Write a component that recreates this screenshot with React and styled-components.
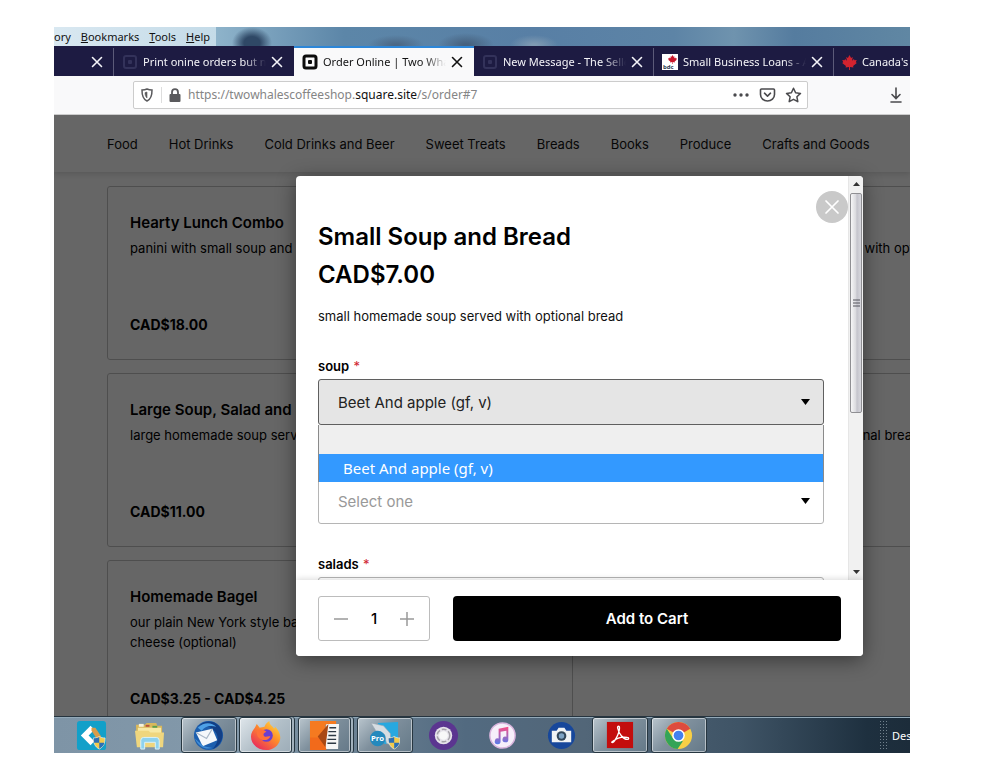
import React, { useState } from 'react';
import styled, { createGlobalStyle, css } from 'styled-components';

const GlobalStyle = createGlobalStyle`
  * { box-sizing: border-box; }
  body { margin: 0; background: #fff; }
  button, select, input { font: inherit; color: inherit; }
  h2, h3, p, ul { margin: 0; padding: 0; }
`;

const shopFont = css`font-family: Inter, "Liberation Sans", sans-serif;`;
const systemFont = css`font-family: "Noto Sans", "Open Sans", sans-serif;`;

const Backdrop = styled.div`
  display: flex;
  height: 100vh;
  padding: 27px 89px 19px 54px;
`;

const Screen = styled.div`
  flex: 1;
  min-width: 0;
  display: flex;
  flex-direction: column;
  overflow: hidden;
`;

/* ---------- browser chrome ---------- */

const MenuBar = styled.nav`
  ${systemFont}
  flex: none;
  display: flex;
  height: 19px;
  background:
    radial-gradient(ellipse 20px 16px at 198px 16px, #2f4866 40%, transparent 100%),
    radial-gradient(ellipse 28px 10px at 342px 18px, #4c6885 10%, transparent 100%),
    radial-gradient(ellipse 28px 12px at 412px 18px, #46617e 10%, transparent 100%),
    radial-gradient(ellipse 24px 10px at 480px 18px, #7f9ab2 10%, transparent 100%),
    linear-gradient(90deg, #8fb4cb 160px, #5c86a8 290px, #587fa5 480px, #5d84a6 620px, #6f93ae 680px, #557c9f 740px, #6087a3 100%);
`;

const MenuItems = styled.div`
  display: flex;
  gap: 10px;
  padding-right: 6px;
  background: linear-gradient(90deg, #d9e8f1, #c4dbe8);
`;

const MenuItem = styled.button`
  padding: 0;
  border: 0;
  background: none;
  font-size: 11px;
  line-height: 18px;
  color: #111;
`;

const TabStrip = styled.div`
  ${systemFont}
  flex: none;
  display: flex;
  height: 30px;
  background: #1d1b42;
  overflow: hidden;
`;

const Tab = styled.div`
  position: relative;
  flex: none;
  display: flex;
  align-items: center;
  gap: 5px;
  width: ${p => (p.$stub ? 60 : 180)}px;
  padding: 0 11px 0 8px;
  justify-content: ${p => (p.$stub ? 'flex-end' : 'flex-start')};
  font-size: 11px;
  color: ${p => (p.$active ? '#111' : '#f4f4f8')};
  background: ${p => (p.$active ? '#f9f9fa' : 'transparent')};
  border-top: 2px solid ${p => (p.$active ? '#2c86d8' : 'transparent')};
  box-shadow: ${p => (p.$line ? 'inset -1px 0 #5c5b79' : 'none')};
`;

const TabTitle = styled.span`
  flex: 1;
  overflow: hidden;
  white-space: nowrap;
  line-height: 18px;
  mask-image: linear-gradient(90deg, #000 82%, transparent 100%);
`;

const TabClose = styled.button`
  display: flex;
  padding: 0;
  border: 0;
  background: none;
`;

const Toolbar = styled.div`
  ${systemFont}
  flex: none;
  display: flex;
  align-items: center;
  justify-content: space-between;
  height: 39px;
  padding: 0 6px 0 79px;
  background: #f9f9fa;
  border-bottom: 1px solid #ccc;
`;

const AddressBar = styled.div`
  flex: 0 0 674px;
  flex-basis: 87.5%;
  display: flex;
  align-items: center;
  gap: 7px;
  height: 28px;
  padding: 0 5px 0 4px;
  background: #fff;
  border: 1px solid #ccc;
  border-radius: 2px;
  color: #5a5a5d;
`;

const ShieldBox = styled.span`
  display: flex;
  padding-right: 5px;
  border-right: 1px solid #ddd;
`;

const PageActions = styled.div`
  display: flex;
  gap: 9px;
`;

const Url = styled.span`
  flex: 1;
  font-size: 12px;
  line-height: 18px;
  color: #858585;
  b { font-weight: 400; color: #111; }
`;

const IconButton = styled.button`
  display: flex;
  padding: 0;
  border: 0;
  background: none;
  color: #4a4a4d;
`;

/* ---------- shop page ---------- */

const Page = styled.main`
  ${shopFont}
  position: relative;
  flex: 1;
  min-height: 0;
  overflow: hidden;
  background: #fff;
  color: #000;
`;

const CategoryNav = styled.nav`
  display: flex;
  gap: 31px;
  height: 57px;
  padding: 0 53px;
  align-items: center;
  box-shadow: 0 2px 6px rgba(0, 0, 0, 0.15);
`;

const CategoryLink = styled.a`
  font-size: 13px;
  line-height: 20px;
  white-space: nowrap;
  color: #111;
  text-decoration: none;
`;

const CardGrid = styled.div`
  display: grid;
  grid-template-columns: repeat(2, 58%);
  grid-auto-rows: 174px;
  gap: 13px;
  padding: 14px 0 0 53px;
`;

const Card = styled.article`
  display: flex;
  flex-direction: column;
  padding: 25px 22px 24px;
  border: 1px solid #c4c4c4;
  border-radius: 3px;
`;

const CardTitle = styled.h3`
  font-size: 15px;
  line-height: 22px;
  font-weight: 600;
`;

const CardText = styled.p`
  flex: 1;
  padding-top: 4px;
  font-size: 13px;
  line-height: 20px;
  white-space: pre-line;
`;

const CardPrice = styled.p`
  font-size: 14px;
  line-height: 20px;
  font-weight: 700;
`;

const Overlay = styled.div`
  position: absolute;
  inset: 0;
  display: flex;
  padding: 61px 47px 60px 242px;
  background: rgba(0, 0, 0, 0.6);
`;

const Modal = styled.section`
  position: relative;
  flex: 1;
  min-width: 0;
  display: flex;
  flex-direction: column;
  background: #fff;
  border-radius: 4px;
  box-shadow: 0 4px 20px rgba(0, 0, 0, 0.45);
  overflow: hidden;
`;

const ModalTop = styled.div`
  flex: 1;
  min-height: 0;
  display: flex;
`;

const ModalBody = styled.div`
  flex: 1;
  overflow: hidden;
  padding: 42px 24px 0 22px;
`;

const ModalTitle = styled.h2`
  font-size: 24px;
  line-height: 38px;
  font-weight: 600;
`;

const Description = styled.p`
  padding-top: 12px;
  font-size: 13px;
  line-height: 20px;
  color: #111;
`;

const Options = styled.div`
  display: grid;
  gap: 30px;
  padding-top: 30px;
`;

const Field = styled.div`
  display: grid;
  gap: 3px;
`;

const FieldLabel = styled.label`
  font-size: 13px;
  line-height: 20px;
  font-weight: 600;
  span { padding-left: 1px; font-weight: 400; color: #d0232f; }
`;

const SelectBox = styled.div`
  position: relative;
  display: flex;
  align-items: center;
`;

const Select = styled.select`
  appearance: none;
  width: 100%;
  height: 46px;
  padding: 0 19px;
  font-size: 15px;
  border: 1px solid ${p => (p.$open ? '#5f5f5f' : '#b5b5b5')};
  border-radius: 3px;
  background: ${p => (p.$open ? '#e5e5e5' : '#fff')};
  color: ${p => (p.$open ? '#222' : '#999')};
`;

const Caret = styled.svg`
  position: absolute;
  right: 14px;
  pointer-events: none;
`;

const OptionList = styled.ul`
  ${systemFont}
  position: absolute;
  z-index: 1;
  top: 100%;
  left: 0;
  right: 0;
  list-style: none;
  border: solid #8a8a8a;
  border-width: 0 1px;
`;

const Option = styled.li`
  height: ${p => (p.$selected ? 28 : 29)}px;
  padding: 0 24px;
  font-size: 15px;
  line-height: 28px;
  color: #fff;
  background: ${p => (p.$selected ? '#3399ff' : '#efefef')};
`;

const CloseModal = styled.button`
  position: absolute;
  top: 15px;
  right: 15px;
  display: flex;
  padding: 8px;
  border: 0;
  border-radius: 50%;
  background: #c9c9c9;
  color: #fff;
`;

const ScrollBar = styled.div`
  flex: none;
  display: flex;
  flex-direction: column;
  align-items: center;
  width: 15px;
  padding: 6px 1px;
  background: #f1f1f1;
  border-left: 1px solid #e6e6e6;
`;

const ScrollThumb = styled.div`
  display: flex;
  align-items: center;
  justify-content: center;
  flex: 0 0 56%;
  width: 100%;
  margin: 7px 0 auto;
  border: 1px solid #8f8f93;
  border-radius: 2px;
  background: linear-gradient(90deg, #f6f6f7, #dcdce0 45%, #c4c4cc 60%, #d8d8de);
`;

const ModalFooter = styled.footer`
  position: relative;
  flex: none;
  display: flex;
  gap: 23px;
  padding: 16px 22px 15px;
  background: #fff;
  box-shadow: 0 -1px 6px rgba(0, 0, 0, 0.15);
`;

const Stepper = styled.div`
  flex: 0 0 112px;
  display: flex;
  align-items: center;
  justify-content: space-between;
  height: 45px;
  padding: 0 15px;
  border: 1px solid #bcbcbc;
  border-radius: 3px;
`;

const StepButton = styled.button`
  display: flex;
  padding: 0;
  border: 0;
  background: none;
  color: #999;
`;

const Quantity = styled.input`
  width: 32px;
  padding: 0;
  border: 0;
  text-align: center;
  font-size: 15px;
  font-weight: 500;
`;

const AddButton = styled.button`
  flex: 1;
  border: 0;
  border-radius: 4px;
  background: #000;
  color: #fff;
  font-size: 15px;
  font-weight: 600;
`;

/* ---------- taskbar ---------- */

const TaskBar = styled.footer`
  ${systemFont}
  flex: none;
  display: flex;
  align-items: center;
  justify-content: space-between;
  height: 37px;
  padding-left: 9px;
  border-top: 1px solid #26343f;
  box-shadow: inset 0 1px #93a9b8;
  background: linear-gradient(90deg, #7e94a6, #8399aa 22%, #6b8193 35%, #526a80 48%, #526678 62%, #3f5466 80%, #1e303f 95%, #1c2c3a);
  color: #fff;
`;

const TaskItems = styled.div`
  flex: 0 0 76%;
  display: flex;
  justify-content: space-between;
`;

const TaskButton = styled.button`
  display: flex;
  align-items: center;
  justify-content: center;
  width: ${p => (p.$stacked ? 53 : 56)}px;
  height: 36px;
  margin-right: ${p => (p.$stacked ? 3 : 0)}px;
  padding: 0;
  border: 1px solid ${p => (p.$running ? '#263640' : 'transparent')};
  border-radius: 3px;
  background: ${p => {
    if (p.$focused) return 'linear-gradient(135deg, #dfe6eb, #b3c0c9 50%, #9dadb8)';
    return p.$running ? 'linear-gradient(135deg, #b9c5cd, #7f909d 45%, #657988)' : 'none';
  }};
  box-shadow:
    inset 0 0 0 1px ${p => (p.$running ? 'rgba(255, 255, 255, 0.5)' : 'transparent')},
    2px 0 ${p => (p.$stacked ? '#a3b2bd' : 'transparent')},
    3px 0 ${p => (p.$stacked ? '#263640' : 'transparent')};
`;

const TaskTail = styled.div`
  display: flex;
  align-items: center;
  gap: 5px;
  width: 31px;
  overflow: hidden;
  font-size: 11px;
`;

const Grip = styled.svg`
  flex: none;
`;

/* ---------- icons ---------- */

const Cross = ({ size = 12, width = 1.6 }) => (
  <svg width={size} height={size} viewBox="0 0 12 12" fill="none" stroke="currentColor" strokeWidth={width} strokeLinecap="round">
    <path d="M1.5 1.5l9 9M10.5 1.5l-9 9" />
  </svg>
);

const SquareLogo = ({ dim }) => (
  <svg width="16" height="16" viewBox="0 0 16 16">
    <rect x="2" y="2" width="12" height="12" rx="2" fill="none" stroke={dim ? '#33325a' : '#0c0c0c'} strokeWidth={dim ? 2 : 3} />
    <rect x="6" y="6" width="4" height="4" rx="1" fill={dim ? '#33325a' : '#0c0c0c'} />
  </svg>
);

const leaf = 'M8 0l1.7 3.2 1.8-1-.8 4 2-2 .6 1.4 2.4-.4-1 2.6 1.1.8-4 3.2.4 1.4-3.7-.5V16h-1v-3.3l-3.7.5.4-1.4-4-3.2 1.1-.8-1-2.6 2.4.4.6-1.4 2 2-.8-4 1.8 1z';

const MapleIcon = () => (
  <svg width="15" height="15" viewBox="0 0 16 16"><path d={leaf} fill="#d3232f" /></svg>
);

const BankIcon = () => (
  <svg width="16" height="16" viewBox="0 0 16 16">
    <rect width="16" height="16" fill="#fff" />
    <g transform="translate(6 1) scale(.56)"><path d={leaf} fill="#c9162b" /></g>
    <text x="1" y="15" fontSize="6" fontWeight="700" fontFamily="Open Sans, sans-serif" fill="#26364f">bdc</text>
  </svg>
);

const ShieldIcon = () => (
  <svg width="18" height="16" viewBox="0 0 18 16" fill="none" stroke="currentColor" strokeWidth="1.5">
    <path d="M9 2c1.700 .8 3.300 1 5 1 .1 5-.6 9-5 11-4.400-2-5.100-6-5-11 1.700 0 3.300-.2 5-1z" />
    <path d="M9 5v6c-1.600-1.400-2-3.400-2-5.400z" fill="currentColor" strokeWidth=".6" />
  </svg>
);

const LockIcon = () => (
  <svg width="12" height="14" viewBox="0 0 12 14">
    <path d="M3 7V4.200a3 3 0 016 0V7" fill="none" stroke="currentColor" strokeWidth="1.800" />
    <rect x="0.500" y="6" width="11" height="8" rx="1" fill="currentColor" />
  </svg>
);

const DotsIcon = () => (
  <svg width="18" height="16" viewBox="0 0 18 16" fill="currentColor">
    <circle cx="3" cy="8" r="1.700" /><circle cx="9" cy="8" r="1.700" /><circle cx="15" cy="8" r="1.700" />
  </svg>
);

const PocketIcon = () => (
  <svg width="17" height="16" viewBox="0 0 17 16" fill="none" stroke="currentColor" strokeWidth="1.600" strokeLinecap="round" strokeLinejoin="round">
    <path d="M2.500 2h12a1 1 0 011 1v4.500a7 6.500 0 01-14 0V3a1 1 0 011-1z" />
    <path d="M5.500 6.200l3 2.900 3-2.900" />
  </svg>
);

const StarIcon = () => (
  <svg width="17" height="16" viewBox="0 0 17 16" fill="none" stroke="currentColor" strokeWidth="1.500" strokeLinejoin="round">
    <path d="M8.500 1.300l2.100 4.500 4.900.6-3.600 3.400.9 4.900-4.300-2.400-4.300 2.400.9-4.900L1.500 6.400l4.900-.6z" />
  </svg>
);

const DownloadIcon = () => (
  <svg width="16" height="18" viewBox="0 0 16 18" fill="none" stroke="currentColor" strokeWidth="1.600" strokeLinecap="round">
    <path d="M8 2v10M4 8.500l4 4 4-4M3 16h10" />
  </svg>
);

const AdminShield = ({ x, y }) => (
  <g transform={`translate(${x} ${y})`}>
    <path d="M6 0c2 1.200 3.600 1.500 6 1.500C12 7 10.500 10.500 6 13 1.500 10.500 0 7 0 1.500 2.400 1.500 4 1.200 6 0z" fill="#f3cb4a" stroke="#dfe5ea" strokeWidth=".8" />
    <path d="M6 .5V6.500H.7C.3 5 .3 3.500.3 1.900 2.600 1.900 4 1.700 6 .5zM6 6.500h5.300C10.500 9.500 9 11.200 6 12.600z" fill="#2c6fb5" />
  </g>
);

const taskIcons = {
  remote: (
    <>
      <rect x="1" y="1" width="30" height="30" rx="3" fill="#12a0c9" />
      <path d="M15 6L5 16l10 10 4-4-6-6 6-6z" fill="#fff" />
      <path d="M16 8h4l6 9-4 3-6-9z" fill="#d99c48" />
      <AdminShield x={18} y={17} />
    </>
  ),
  explorer: (
    <>
      <path d="M2 5h9l2-2h10l1 3h5v20H3z" fill="#d9b85c" />
      <path d="M4 8h24v18H4z" fill="#f7e9a4" />
      <path d="M1 11h14l2 2h14l-1 15H3z" fill="#efd67e" />
      <path d="M5 4h5v3H5z" fill="#f5f2dc" /><path d="M12 5h4v2h-4z" fill="#b9533c" /><path d="M19 6h5v2h-5z" fill="#5a9f4d" />
      <path d="M7 30v-9q0-3 3-3h13q3 0 3 3v9h-4v-7H11v7z" fill="#8ed2ee" stroke="#d9f2fb" />
    </>
  ),
  mail: (
    <>
      <circle cx="16" cy="16" r="15" fill="#1d5fae" />
      <path d="M6 6C13-1 26 0 30 12c2 8-3 16-10 18 6-6 7-13 3-18C18 6 11 5 6 6z" fill="#123f86" />
      <path d="M5 8c6-6 14-6 19-1-7-2-12 0-15 4z" fill="#4ea1e6" />
      <path d="M3 13l17-4 5 12-15 6z" fill="#f5f8fb" />
      <path d="M3 13l11 6 6-10" fill="none" stroke="#aab8c8" strokeWidth="1.200" />
      <path d="M2 19c3 8 11 12 18 10l-9-2z" fill="#3e8cd6" />
    </>
  ),
  firefox: (
    <>
      <defs>
        <linearGradient id="fox" x1="1" y1="0" x2=".2" y2="1">
          <stop offset="0" stopColor="#ffe94a" /><stop offset=".45" stopColor="#ff9128" /><stop offset="1" stopColor="#e8265f" />
        </linearGradient>
      </defs>
      <path d="M5 8l2-4 3 4 5-1c1-3 3-5 5-6 0 4 3 5 5 8l1-2c4 4 6 9 5 13-1 6-7 11-14 11C8 31 1 25 1 17c0-4 2-6 4-9z" fill="url(#fox)" />
      <circle cx="17" cy="16" r="6.500" fill="#6a3fd0" />
      <path d="M7 11c3-2 7-1 10 1-3 1-4 3-2 5 2 1 4-1 6 0-2 5-10 5-13 0-1-2-1-4-1-6z" fill="#ff7139" />
    </>
  ),
  notes: (
    <>
      <path d="M1 1h27v4H17v26H1z" fill="#f57a20" />
      <path d="M18 4h13l-1 26H14z" fill="#f6f6f6" />
      <path d="M1 18h14l3 13H1z" fill="#f26a1b" />
      <path d="M20 4L9 17l8 11z" fill="#a94814" />
      <path d="M21 8h7M20 12h8M20 16h8M19 20h9M19 24h9" stroke="#2d3944" strokeWidth="1.500" />
    </>
  ),
  pro: (
    <>
      <path d="M9 3l21-1v20l-14 3z" fill="#28a8df" />
      <path d="M2 3l13 3 7 8 1 12-5-2-2-9-9-4z" fill="#d6dde2" stroke="#93a1ab" strokeWidth=".6" />
      <circle cx="9" cy="19" r="8" fill="#2489bd" />
      <text x="2" y="22" fontSize="8" fontWeight="700" fontFamily="Open Sans, sans-serif" fill="#fff">Pro</text>
      <AdminShield x={20} y={17} />
    </>
  ),
  tor: (
    <>
      <circle cx="16" cy="16" r="15" fill="#5b3590" />
      <circle cx="16" cy="16" r="9" fill="#e6e3ea" />
      <circle cx="16" cy="16" r="6.500" fill="none" stroke="#a5a2a9" strokeWidth="1.500" strokeDasharray="5 2" />
      <circle cx="16" cy="16" r="4.500" fill="#f8f8f8" />
    </>
  ),
  music: (
    <>
      <defs>
        <linearGradient id="note" x1="0" y1="0" x2="0" y2="1">
          <stop offset="0" stopColor="#fb4d86" /><stop offset="1" stopColor="#587bea" />
        </linearGradient>
      </defs>
      <circle cx="16" cy="16" r="13" fill="#f6effa" stroke="#d9b4dd" strokeWidth="1.500" />
      <path d="M12 9l10-2v13a3 3 0 11-2-2.800V11l-6 1.200V22a3 3 0 11-2-2.800z" fill="url(#note)" />
    </>
  ),
  camera: (
    <>
      <circle cx="16" cy="16" r="14" fill="#17479b" />
      <path d="M6 11h5l2-3h6l2 3h5v12H6z" fill="#f1f3f5" />
      <circle cx="16" cy="16.500" r="5" fill="#33475b" />
      <circle cx="16" cy="16.500" r="2.800" fill="#7fa3c4" />
    </>
  ),
  pdf: (
    <>
      <rect x="3" y="2" width="27" height="27" fill="#c30d0d" />
      <path d="M8 23c2 2 8-9 8-15 0-2-2-2-2 0 1 6 6 12 10 12 2 0 2-2 0-2-5-1-11 1-15 4-1 .5-1 1-1 1z" fill="none" stroke="#fff" strokeWidth="1.400" />
    </>
  ),
  chrome: (
    <>
      <circle cx="16" cy="16" r="14" fill="#f8cf45" />
      <path d="M16 16L3.900 9A14 14 0 0128.100 9z" fill="#dd4b3e" />
      <path d="M10.400 19.200L3.900 9A14 14 0 0015 30l5.500-8z" fill="#33a457" />
      <circle cx="16" cy="16" r="6.500" fill="#fff" />
      <circle cx="16" cy="16" r="5" fill="#4480ee" />
    </>
  ),
};

/* ---------- content ---------- */

const tabs = [
  { title: 'Print onine orders but not', icon: <SquareLogo dim /> },
  { title: 'Order Online | Two Whales', icon: <SquareLogo />, active: true },
  { title: 'New Message - The Seller', icon: <SquareLogo dim />, line: true },
  { title: 'Small Business Loans - Ap', icon: <BankIcon />, line: true },
  { title: "Canada's", icon: <MapleIcon /> },
];

const categories = [
  'Food', 'Hot Drinks', 'Cold Drinks and Beer', 'Sweet Treats', 'Breads', 'Books', 'Produce', 'Crafts and Goods',
];

const products = [
  { name: 'Hearty Lunch Combo', text: 'panini with small soup and salad', price: 'CAD$18.00' },
  { name: 'Large Soup and Bread', text: 'large homemade soup served with salad, with optional bread', price: 'CAD$9.00' },
  { name: 'Large Soup, Salad and Bread', text: 'large homemade soup served with salad', price: 'CAD$11.00' },
  { name: 'Small Soup and Bread', text: 'small home-made soup served with optional bread', price: 'CAD$7.00' },
  { name: 'Homemade Bagel', text: 'our plain New York style bagel with cream\ncheese (optional)', price: 'CAD$3.25 - CAD$4.25' },
];

const tasks = [
  { id: 'remote' }, { id: 'explorer' }, { id: 'mail', running: true },
  { id: 'firefox', running: true, focused: true, stacked: true },
  { id: 'notes', running: true, stacked: true }, { id: 'pro', running: true },
  { id: 'tor' }, { id: 'music' }, { id: 'camera' },
  { id: 'pdf', running: true }, { id: 'chrome', running: true },
];

const OptionField = ({ name, value, open }) => (
  <Field>
    <FieldLabel htmlFor={name}>{name} <span>*</span></FieldLabel>
    <SelectBox>
      <Select id={name} $open={open} defaultValue={value}>
        <option>{value}</option>
      </Select>
      <Caret width="9" height="6" viewBox="0 0 9 6"><path d="M0 0h9L4.500 6z" fill="#000" /></Caret>
      {open && (
        <OptionList>
          <Option />
          <Option $selected>{value}</Option>
        </OptionList>
      )}
    </SelectBox>
  </Field>
);

const Browser = () => (
  <>
    <MenuBar>
      <MenuItems>
        <MenuItem>ory</MenuItem>
        <MenuItem><u>B</u>ookmarks</MenuItem>
        <MenuItem><u>T</u>ools</MenuItem>
        <MenuItem><u>H</u>elp</MenuItem>
      </MenuItems>
    </MenuBar>
    <TabStrip>
      <Tab $stub $line>
        <TabClose aria-label="Close tab"><Cross /></TabClose>
      </Tab>
      {tabs.map(tab => (
        <Tab key={tab.title} $active={tab.active} $line={tab.line}>
          {tab.icon}
          <TabTitle>{tab.title}</TabTitle>
          <TabClose aria-label="Close tab"><Cross /></TabClose>
        </Tab>
      ))}
    </TabStrip>
    <Toolbar>
      <AddressBar>
        <ShieldBox><ShieldIcon /></ShieldBox>
        <LockIcon />
        <Url>https://twowhalescoffeeshop.<b>square.site</b>/s/order#7</Url>
        <PageActions>
          <IconButton aria-label="Page actions"><DotsIcon /></IconButton>
          <IconButton aria-label="Save to Pocket"><PocketIcon /></IconButton>
          <IconButton aria-label="Bookmark"><StarIcon /></IconButton>
        </PageActions>
      </AddressBar>
      <IconButton aria-label="Downloads"><DownloadIcon /></IconButton>
    </Toolbar>
  </>
);

const ItemModal = () => {
  const [count, setCount] = useState(1);
  return (
    <Modal>
      <ModalTop>
        <ModalBody>
          <ModalTitle>Small Soup and Bread</ModalTitle>
          <ModalTitle as="p">CAD$7.00</ModalTitle>
          <Description>small homemade soup served with optional bread</Description>
          <Options>
            <OptionField name="soup" value="Beet And apple (gf, v)" open />
            <OptionField name="bread" value="Select one" />
            <OptionField name="salads" value="Select one" />
          </Options>
        </ModalBody>
        <ScrollBar>
          <svg width="7" height="4" viewBox="0 0 7 4"><path d="M0 4h7L3.500 0z" fill="#333" /></svg>
          <ScrollThumb>
            <svg width="7" height="8" viewBox="0 0 7 8"><path d="M0 1h7M0 4h7M0 7h7" stroke="#55555c" /></svg>
          </ScrollThumb>
          <svg width="7" height="4" viewBox="0 0 7 4"><path d="M0 0h7L3.500 4z" fill="#333" /></svg>
        </ScrollBar>
      </ModalTop>
      <CloseModal aria-label="Close"><Cross size={16} width={1.3} /></CloseModal>
      <ModalFooter>
        <Stepper>
          <StepButton aria-label="Less" onClick={() => setCount(Math.max(1, count - 1))}>
            <svg width="14" height="14" viewBox="0 0 14 14"><path d="M0 7h14" stroke="currentColor" strokeWidth="1.500" /></svg>
          </StepButton>
          <Quantity aria-label="Quantity" value={count} readOnly />
          <StepButton aria-label="More" onClick={() => setCount(count + 1)}>
            <svg width="14" height="14" viewBox="0 0 14 14"><path d="M0 7h14M7 0v14" stroke="currentColor" strokeWidth="1.500" /></svg>
          </StepButton>
        </Stepper>
        <AddButton>Add to Cart</AddButton>
      </ModalFooter>
    </Modal>
  );
};

const App = () => (
  <Backdrop>
    <GlobalStyle />
    <Screen>
      <Browser />
      <Page>
        <CategoryNav>
          {categories.map(name => <CategoryLink key={name} href="#7">{name}</CategoryLink>)}
        </CategoryNav>
        <CardGrid>
          {products.map(product => (
            <Card key={product.name}>
              <CardTitle>{product.name}</CardTitle>
              <CardText>{product.text}</CardText>
              <CardPrice>{product.price}</CardPrice>
            </Card>
          ))}
        </CardGrid>
        <Overlay><ItemModal /></Overlay>
      </Page>
      <TaskBar>
        <TaskItems>
          {tasks.map(task => (
            <TaskButton
              key={task.id}
              aria-label={task.id}
              $running={task.running}
              $focused={task.focused}
              $stacked={task.stacked}
            >
              <svg width="31" height="31" viewBox="0 0 32 32">{taskIcons[task.id]}</svg>
            </TaskButton>
          ))}
        </TaskItems>
        <TaskTail>
          <Grip width="8" height="28" viewBox="0 0 8 28">
            <path d="M1.500 0v28M4.500 0v28M7.500 0v28" stroke="#71818d" strokeDasharray="1 2" />
          </Grip>
          Desktop
        </TaskTail>
      </TaskBar>
    </Screen>
  </Backdrop>
);

export default App;
